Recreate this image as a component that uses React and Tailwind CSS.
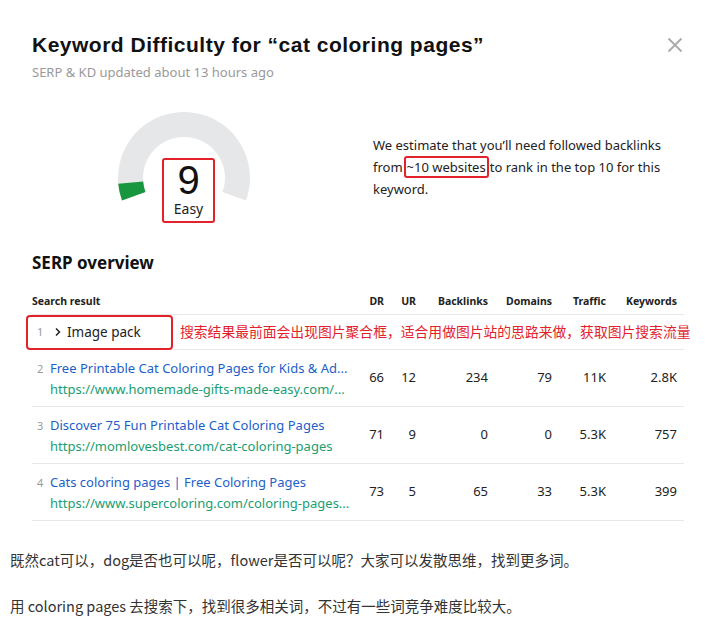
const rows = [
  { n: 2, title: 'Free Printable Cat Coloring Pages for Kids & Ad...', url: 'https://www.homemade-gifts-made-easy.com/...', dr: 66, ur: 12, bl: 234, dom: 79, tr: '11K', kw: '2.8K' },
  { n: 3, title: 'Discover 75 Fun Printable Cat Coloring Pages', url: 'https://momlovesbest.com/cat-coloring-pages', dr: 71, ur: 9, bl: 0, dom: 0, tr: '5.3K', kw: '757' },
  { n: 4, title: 'Cats coloring pages | Free Coloring Pages', url: 'https://www.supercoloring.com/coloring-pages...', dr: 73, ur: 5, bl: 65, dom: 33, tr: '5.3K', kw: '399' },
];

const cols = 'grid grid-cols-[320px_32px_32px_72px_64px_54px_71px] pr-[7px]';

function Gauge() {
  return (
    <div className="relative ml-[78px] h-[124px] w-[156px] shrink-0">
      <svg width="156" height="124" viewBox="0 0 156 124" className="absolute left-0 top-0">
        <path d="M23.73 91.3 A53.5 53.5 0 1 1 124.27 91.3" fill="none" stroke="#e6e7e8" strokeWidth="25" />
        <path d="M23.73 91.3 A53.5 53.5 0 0 1 20.7 77.66" fill="none" stroke="#17963f" strokeWidth="25" />
      </svg>
      <div className="absolute left-[52px] top-[53px] flex h-[65px] w-[53px] flex-col items-center rounded-[3px] border-2 border-[#e3212b]">
        <span className="font-['Liberation_Sans',sans-serif] text-[40px] leading-[40px] text-[#111]">9</span>
        <span className="mt-[1px] text-[14px] leading-[16px] text-[#222]">Easy</span>
      </div>
    </div>
  );
}

export default function App() {
  return (
    <div className="relative h-[627px] w-[716px] overflow-hidden bg-white font-['Noto_Sans','Noto_Sans_CJK_SC',sans-serif] text-[#222]">
      <div className="px-8 pt-[32px]">
        <div className="flex items-start justify-between">
          <h1 className="font-['Liberation_Sans',sans-serif] text-[21px] font-bold leading-[26px] tracking-[0.5px] text-[#111]">Keyword Difficulty for “cat coloring pages”</h1>
          <svg width="16" height="16" viewBox="0 0 16 16" className="mr-[1px] mt-[5px]">
            <path d="M1.5 1.5 L14.5 14.5 M14.5 1.5 L1.5 14.5" stroke="#aaa" strokeWidth="1.8" />
          </svg>
        </div>
        <p className="mt-[4px] text-[13px] leading-[20px] text-[#999]">SERP &amp; KD updated about 13 hours ago</p>

        <div className="mt-[23px] flex">
          <Gauge />
          <p className="ml-[107px] mt-[29px] text-[13px] leading-[22px] text-[#222]">
            We estimate that you’ll need followed backlinks<br />
            from<span className="mx-[1px] rounded-[3px] border-2 border-[#e3212b] px-[1px]">~10 websites</span>to rank in the top 10 for this<br />
            keyword.
          </p>
        </div>

        <h2 className="mt-[23px] text-[17px] font-bold leading-[22px] text-[#111]">SERP overview</h2>

        <div className="mt-[15px]">
          <div className={`${cols} h-[26px] items-center border-b border-[#e8e8e8] text-[10.5px] font-bold text-[#222]`}>
            <span>Search result</span>
            <span className="text-right">DR</span>
            <span className="text-right">UR</span>
            <span className="text-right">Backlinks</span>
            <span className="text-right">Domains</span>
            <span className="text-right">Traffic</span>
            <span className="text-right">Keywords</span>
          </div>

          <div className="relative flex h-[35px] items-center border-b border-[#e8e8e8]">
            <div className="-ml-[6px] flex h-[35px] w-[147px] shrink-0 items-center rounded-[4px] border-2 border-[#e3212b] pl-[9px]">
              <span className="w-[12px] text-[11px] text-[#999]">1</span>
              <svg width="10" height="10" viewBox="0 0 10 10" className="ml-[4px]">
                <path d="M3 1.5 L6.5 5 L3 8.5" fill="none" stroke="#222" strokeWidth="1.5" />
              </svg>
              <span className="ml-[4px] text-[13.5px] text-[#222]">Image pack</span>
            </div>
            <span className="ml-[7px] whitespace-nowrap text-[13.8px] text-[#e3212b]">搜索结果最前面会出现图片聚合框，适合用做图片站的思路来做，获取图片搜索流量</span>
          </div>

          {rows.map((r) => (
            <div key={r.n} className={`${cols} h-[57px] items-center border-b border-[#e8e8e8] text-[13px]`}>
              <div className="flex min-w-0">
                <span className="mt-[2px] w-[18px] pl-[5px] text-[11px] leading-[18px] text-[#999]">{r.n}</span>
                <div className="min-w-0">
                  <div className="whitespace-nowrap leading-[20px] text-[#1c5fc9]">{r.title}</div>
                  <div className="mt-[1px] whitespace-nowrap leading-[20px] text-[#1a9d72]">{r.url}</div>
                </div>
              </div>
              <span className="text-right">{r.dr}</span>
              <span className="text-right">{r.ur}</span>
              <span className="text-right">{r.bl}</span>
              <span className="text-right">{r.dom}</span>
              <span className="text-right">{r.tr}</span>
              <span className="text-right">{r.kw}</span>
            </div>
          ))}
        </div>
      </div>

      <div className="mt-[29px] px-[10px] font-['Noto_Sans_CJK_SC',sans-serif] text-[14.5px] leading-[20px] text-[#333]">
        <p>既然cat可以，dog是否也可以呢，flower是否可以呢？大家可以发散思维，找到更多词。</p>
        <p className="mt-[26px]">用 coloring pages 去搜索下，找到很多相关词，不过有一些词竞争难度比较大。</p>
      </div>
    </div>
  );
}
